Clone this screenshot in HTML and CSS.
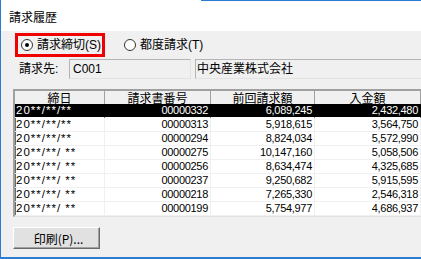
FILE: index.html
```html
<!DOCTYPE html>
<html lang="ja">
<head>
    <meta charset="UTF-8">
    <title>請求履歴</title>
    <link rel="stylesheet" href="styles.css">
</head>
<body>
<div class="window">
    <!-- Title bar -->
    <div class="titlebar">
        <div class="top-edge"></div>
        <div class="title">請求履歴</div>
    </div>

    <div class="content">
        <!-- Mode radios -->
        <div class="mode-row">
            <label class="radio highlight">
                <svg class="radio-icon" width="12" height="12" viewBox="0 0 12 12">
                    <circle cx="6" cy="6" r="5.5" fill="#fff" stroke="#333"/>
                    <circle cx="6" cy="6" r="2" fill="#000"/>
                </svg>
                請求締切(S)
            </label>
            <label class="radio">
                <svg class="radio-icon" width="12" height="12" viewBox="0 0 12 12">
                    <circle cx="6" cy="6" r="5.5" fill="#fff" stroke="#333"/>
                </svg>
                都度請求(T)
            </label>
        </div>

        <!-- Client -->
        <div class="client-row">
            <span class="client-label">請求先:</span>
            <div class="field code">C001</div>
            <div class="field name">中央産業株式会社</div>
        </div>

        <!-- History list -->
        <div class="list">
            <div class="list-head">
                <div>締日</div>
                <div>請求書番号</div>
                <div>前回請求額</div>
                <div>入金額</div>
            </div>
            <div class="list-row selected">
                <div class="date">20**/**/**</div><div>00000332</div><div>6,089,245</div><div>2,432,480</div>
            </div>
            <div class="list-row">
                <div class="date">20**/**/**</div><div>00000313</div><div>5,918,615</div><div>3,564,750</div>
            </div>
            <div class="list-row">
                <div class="date">20**/**/**</div><div>00000294</div><div>8,824,034</div><div>5,572,990</div>
            </div>
            <div class="list-row">
                <div class="date">20**/**/ **</div><div>00000275</div><div>10,147,160</div><div>5,058,506</div>
            </div>
            <div class="list-row">
                <div class="date">20**/**/ **</div><div>00000256</div><div>8,634,474</div><div>4,325,685</div>
            </div>
            <div class="list-row">
                <div class="date">20**/**/ **</div><div>00000237</div><div>9,250,682</div><div>5,915,595</div>
            </div>
            <div class="list-row">
                <div class="date">20**/**/ **</div><div>00000218</div><div>7,265,330</div><div>2,546,318</div>
            </div>
            <div class="list-row">
                <div class="date">20**/**/ **</div><div>00000199</div><div>5,754,977</div><div>4,686,937</div>
            </div>
        </div>

        <button class="print-btn">印刷(P)...</button>
    </div>
</div>
</body>
</html>
```

FILE: styles.css
```css
body {
    margin: 0;
    width: 421px;
    height: 259px;
    overflow: hidden;
    font-family: "Liberation Sans", "Noto Sans CJK JP", sans-serif;
    font-size: 12px;
    color: #000;
    background: #f0f0f0;
}

.window {
    height: 259px;
    border-left: 1px solid #2b7bd3;
    border-bottom: 2px solid #2b7bd3;
    box-sizing: border-box;
    overflow: hidden;
}

.titlebar {
    height: 31px;
    background: #fff;
}

.top-edge {
    height: 1px;
    margin-left: 200px;
    background: #2b7bd3;
}

.title {
    padding: 9px 0 0 8px;
    line-height: 14px;
    font-family: "Noto Sans CJK JP", sans-serif;
}

.content {
    background: #f0f0f0;
    padding-top: 2px;
}

/* radios */
.mode-row {
    display: flex;
    align-items: center;
    height: 24px;
}

.radio {
    display: flex;
    align-items: center;
    gap: 4px;
    line-height: 14px;
}

.radio-icon {
    flex: none;
}

.radio.highlight {
    margin-left: 14px;
    width: 90px;
    height: 24px;
    box-sizing: border-box;
    border: 3px solid #f00000;
    padding-left: 3px;
}

.radio + .radio {
    margin-left: 19px;
}

/* client */
.client-row {
    display: flex;
    align-items: center;
    margin-top: 2px;
    height: 20px;
}

.client-label {
    width: 50px;
    padding-left: 18px;
    line-height: 14px;
}

.field {
    height: 20px;
    box-sizing: border-box;
    border: 1px solid #b4b4b4;
    border-bottom-color: #e3e3e3;
    border-right-color: #e3e3e3;
    padding: 2px 3px;
    line-height: 15px;
}

.field.code {
    width: 122px;
}

.field.name {
    margin-left: 4px;
    flex: 1;
    border-right: none;
    padding-left: 1px;
}

/* list view */
.list {
    margin: 10px 0 0 12px;
    width: 410px;
    background: #fff;
    border-top: 2px solid #a0a0a0;
    border-left: 2px solid #a0a0a0;
    border-bottom: 1px solid #e3e3e3;
    box-shadow: inset 1px 1px 0 #696969;
}

.list-head,
.list-row {
    display: grid;
    grid-template-columns: 90px 106px 104px 106px;
}

.list-head div {
    height: 13px;
    line-height: 13px;
    text-align: center;
    background: #f0f0f0;
    border-right: 1px solid #a0a0a0;
    font-family: "Noto Sans CJK JP", sans-serif;
}

.list-row div {
    height: 13px;
    line-height: 13px;
    border-right: 1px solid #f0f0f0;
    border-bottom: 1px solid #f0f0f0;
    text-align: right;
    padding-right: 2px;
    font-size: 11px;
    letter-spacing: -0.3px;
}

.list-row .date {
    text-align: left;
    padding-left: 1px;
    font-size: 11.5px;
    letter-spacing: 1px;
}

.list-row.selected div {
    background: #000;
    color: #fff;
    border-right-color: #000;
    border-bottom-color: #fff;
}

/* button */
.print-btn {
    display: block;
    margin: 10px 0 0 12px;
    width: 87px;
    height: 22px;
    padding: 0 0 0 4px;
    font: inherit;
    font-family: "Noto Sans CJK JP", sans-serif;
    background: #e1e1e1;
    border: 1px solid;
    border-color: #fff #696969 #696969 #fff;
    box-shadow: inset -1px -1px 0 #a0a0a0;
    color: #000;
}
```
